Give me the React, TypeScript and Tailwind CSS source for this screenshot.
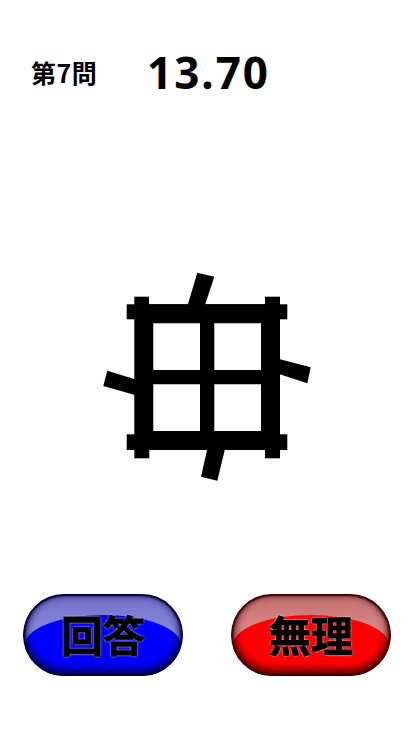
const CJK = "font-['Noto_Sans_CJK_JP',sans-serif]";

function Glyph() {
  return (
    <svg width="230" height="230" viewBox="90 260 230 230" className="block" fill="#000">
      {/* frame */}
      <path d="M134.3 304.3H280V450H134.3ZM153.3 323.3V370H200V323.3ZM214.3 323.3V370H261V323.3ZM153.3 384.3V431H200V384.3ZM214.3 384.3V431H261V384.3Z" fillRule="evenodd" />
      {/* serifs */}
      <rect x="126.7" y="304.3" width="160.6" height="15" />
      <rect x="126.7" y="434.3" width="160.6" height="15.7" />
      <rect x="134.3" y="296.7" width="14.7" height="10" />
      <rect x="265" y="296.7" width="15" height="10" />
      <rect x="134.3" y="447" width="15" height="11.3" />
      <rect x="265" y="447" width="15" height="11.3" />
      {/* slanted strokes */}
      <polygon points="197.3,272.7 214.3,276.7 205,305 187.7,305" />
      <polygon points="225,449 207.3,449 201,476.7 217.3,480.7" />
      <polygon points="107.3,370.7 135,379.3 135,395 103.3,386" />
      <polygon points="279,359 310.7,367.3 307.3,383.3 279,374" />
    </svg>
  );
}

function GelButton({ label, tone }: { label: string; tone: "blue" | "red" }) {
  const gloss =
    tone === "blue"
      ? "bg-[linear-gradient(to_bottom,#7070c8_0%,#a0a0f4_100%)]"
      : "bg-[linear-gradient(to_bottom,#c07070_0%,#ffa0a0_100%)]";
  const dome = tone === "blue" ? "bg-[#0000ff]" : "bg-[#ff0000]";
  const edge =
    tone === "blue"
      ? "shadow-[inset_0_-3px_9px_3px_#000040,inset_0_0_2px_2px_#000030]"
      : "shadow-[inset_0_-3px_9px_3px_#400000,inset_0_0_2px_2px_#300000]";

  return (
    <div className={`relative h-[82px] w-[160px] overflow-hidden rounded-[41px] blur-[0.5px] ${gloss}`}>
      <div className={`absolute bottom-0 left-[2px] right-[2px] top-[21px] rounded-tl-[78px_30px] rounded-tr-[78px_30px] ${dome}`} />
      <div className={`absolute inset-0 rounded-[41px] ${edge}`} />
      <div className="relative flex h-full items-center justify-center pb-[3px]">
        <span className={`${CJK} text-[42px] font-bold leading-none text-black [-webkit-text-stroke:1px_#000] [text-shadow:0_0_2px_#fff,0_0_2px_#fff]`}>
          {label}
        </span>
      </div>
    </div>
  );
}

export default function App() {
  return (
    <div className="flex h-[736px] w-[414px] flex-col bg-white">
      <div className="mt-[45px] flex h-[54px] items-center">
        <span className={`${CJK} ml-[31px] w-[116px] text-[25px] font-bold leading-none tracking-[0.5px] text-black`}>
          第7問
        </span>
        <span className="font-['Noto_Sans',sans-serif] text-[44px] font-bold leading-none tracking-[2px] text-black">
          13.70
        </span>
      </div>
      <div className="ml-[90px] mt-[161px]">
        <Glyph />
      </div>
      <div className="ml-[23px] mt-[104px] flex w-[368px] justify-between">
        <GelButton label="回答" tone="blue" />
        <GelButton label="無理" tone="red" />
      </div>
    </div>
  );
}
